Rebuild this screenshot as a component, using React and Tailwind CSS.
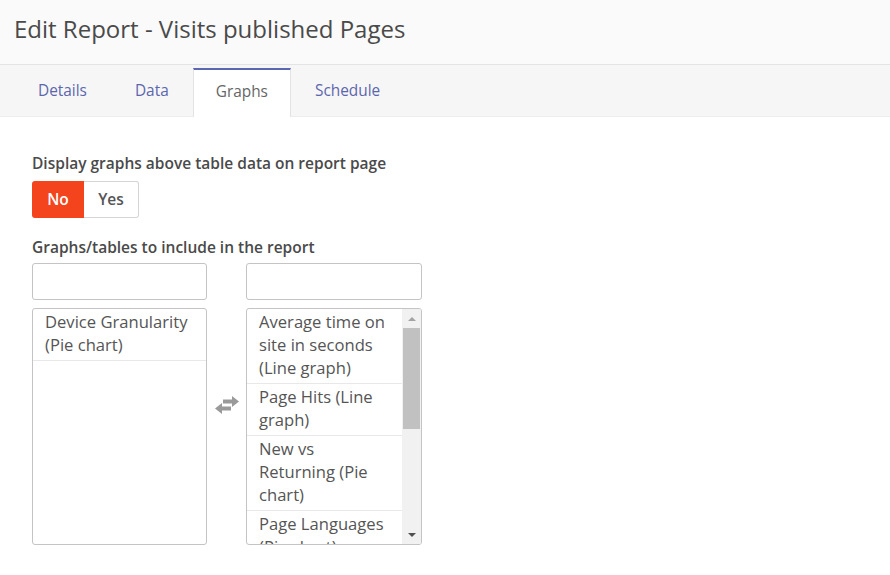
import { useState } from 'react'

const leftItems = ['Device Granularity (Pie chart)']
const rightItems = [
    'Average time on site in seconds (Line graph)',
    'Page Hits (Line graph)',
    'New vs Returning (Pie chart)',
    'Page Languages (Pie chart)',
]

function SwapIcon() {
    return (
        <svg width="26" height="18" viewBox="0 0 26 18" fill="#9a9a9a">
            <path d="M9 3.5h9V0l7 5.5-7 5.5V7.5H9z" />
            <path d="M17 10.5H8V7L1 12.5 8 18v-3.5h9z" />
        </svg>
    )
}

function Scrollbar() {
    return (
        <div className="flex w-[19px] shrink-0 flex-col bg-[#f1f1f1]">
            <div className="flex h-[19px] items-center justify-center">
                <div className="h-0 w-0 border-x-[4px] border-b-[4px] border-x-transparent border-b-[#a3a3a3]" />
            </div>
            <div className="mx-auto h-[101px] w-[17px] bg-[#c1c1c1]" />
            <div className="flex-1" />
            <div className="flex h-[19px] items-center justify-center">
                <div className="h-0 w-0 border-x-[4px] border-t-[4px] border-x-transparent border-t-[#505050]" />
            </div>
        </div>
    )
}

function ListBox({ items, scroll }) {
    return (
        <div className="flex h-[237px] overflow-hidden rounded-[3px] border border-[#c4c4c4] bg-white">
            <ul className="flex-1 overflow-hidden">
                {items.map((item) => (
                    <li key={item} className="border-b border-[#e8e8e8] px-3 pb-[4px] pt-[1px] text-[16.6px] leading-[23px] text-[#555]">
                        {item}
                    </li>
                ))}
            </ul>
            {scroll && <Scrollbar />}
        </div>
    )
}

export default function App() {
    const [display, setDisplay] = useState('no')
    const tabs = ['Details', 'Data', 'Graphs', 'Schedule']
    const active = 'Graphs'

    return (
        <div className="min-h-screen bg-white font-['Open_Sans',sans-serif]">
            <header className="flex h-[65px] items-center border-b border-[#e3e3e3] bg-[#fafafa] px-[14px] pb-[7px]">
                <h1 className="text-[24px] text-[#4a4a4a]">Edit Report - Visits published Pages</h1>
            </header>

            <nav className="flex h-[52px] items-end border-b border-[#ececec] bg-[#f6f6f6] pl-[14px]">
                {tabs.map((tab) =>
                    tab === active ? (
                        <div
                            key={tab}
                            className="-mb-px flex h-[49px] items-center border-x border-t-2 border-x-[#e3e3e3] border-t-[#5c67b3] bg-white px-[22px] pb-[3px] text-[15.4px] text-[#666]"
                        >
                            {tab}
                        </div>
                    ) : (
                        <div key={tab} className="flex h-[48px] items-center px-6 pb-[2px] text-[15.4px] text-[#5c66ad]">
                            {tab}
                        </div>
                    )
                )}
            </nav>

            <main className="px-8 pt-[36px]">
                <p className="mb-[7px] text-[15.5px] font-semibold leading-[21px] text-[#4a4a4a]">
                    Display graphs above table data on report page
                </p>
                <div className="flex h-[37px] w-[107px] text-[15.5px] font-semibold">
                    <button
                        onClick={() => setDisplay('no')}
                        className={
                            display === 'no'
                                ? 'w-[52px] rounded-l-[3px] bg-[#f3441d] text-white'
                                : 'w-[52px] rounded-l-[3px] border border-[#d5d5d5] text-[#555]'
                        }
                    >
                        No
                    </button>
                    <button
                        onClick={() => setDisplay('yes')}
                        className={
                            display === 'yes'
                                ? 'w-[55px] rounded-r-[3px] bg-[#f3441d] text-white'
                                : 'w-[55px] rounded-r-[3px] border border-l-0 border-[#d5d5d5] text-[#555]'
                        }
                    >
                        Yes
                    </button>
                </div>

                <p className="mb-[5px] mt-[19px] text-[15.5px] font-semibold leading-[21px] text-[#4a4a4a]">
                    Graphs/tables to include in the report
                </p>

                <div className="flex items-start">
                    <div className="w-[175px]">
                        <input className="mb-2 h-[37px] w-full rounded-[3px] border border-[#c4c4c4] px-2 outline-none" />
                        <ListBox items={leftItems} />
                    </div>
                    <div className="flex h-[282px] w-[39px] items-end justify-center pb-[131px]">
                        <SwapIcon />
                    </div>
                    <div className="w-[176px]">
                        <input className="mb-2 h-[37px] w-full rounded-[3px] border border-[#c4c4c4] px-2 outline-none" />
                        <ListBox items={rightItems} scroll />
                    </div>
                </div>
            </main>
        </div>
    )
}
